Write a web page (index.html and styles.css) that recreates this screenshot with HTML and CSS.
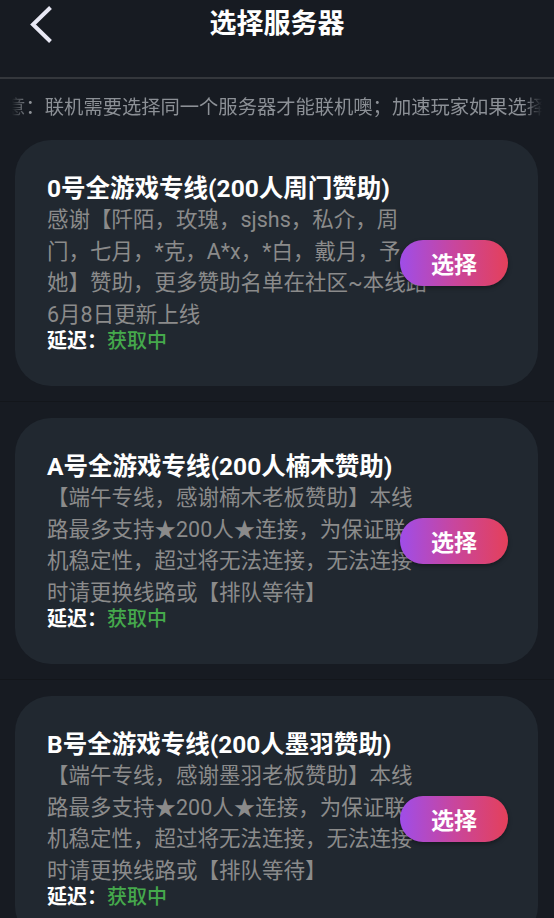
FILE: index.html
```html
<!DOCTYPE html>
<html lang="zh-CN">
<head>
<meta charset="utf-8">
<title>选择服务器</title>
<link rel="stylesheet" href="styles.css">
</head>
<body>
<div class="page">
  <header class="appbar">
    <div class="appbar-row">
      <button class="back-btn" aria-label="返回">
        <svg class="back-icon" viewBox="0 0 28 42" width="28" height="42">
          <polyline points="22.5,4.5 5,21.5 22.5,38.5" fill="none" stroke="#e8e8f4" stroke-width="4" stroke-linejoin="miter"/>
        </svg>
      </button>
      <h1 class="appbar-title">选择服务器</h1>
      <span class="appbar-spacer"></span>
    </div>
  </header>

  <div class="notice">
    <p class="notice-text">注意：联机需要选择同一个服务器才能联机噢；加速玩家如果选择的服务器不同，将无法联机</p>
  </div>

  <ul class="server-list">
    <li class="server-item">
      <div class="server-card">
        <div class="server-info">
          <h2 class="server-name">0号全游戏专线(200人周门赞助)</h2>
          <p class="server-desc">感谢【阡陌，玫瑰，sjshs，私介，周<br>门，七月，*克，A*x，*白，戴月，予<br>她】赞助，更多赞助名单在社区~本线路<br>6月8日更新上线</p>
          <p class="server-ping"><span class="ping-label">延迟：</span><span class="ping-value">获取中</span></p>
        </div>
        <button class="select-btn">选择</button>
      </div>
    </li>
    <li class="server-item">
      <div class="server-card">
        <div class="server-info">
          <h2 class="server-name">A号全游戏专线(200人楠木赞助)</h2>
          <p class="server-desc">【端午专线，感谢楠木老板赞助】本线<br>路最多支持★200人★连接，为保证联<br>机稳定性，超过将无法连接，无法连接<br>时请更换线路或【排队等待】</p>
          <p class="server-ping"><span class="ping-label">延迟：</span><span class="ping-value">获取中</span></p>
        </div>
        <button class="select-btn">选择</button>
      </div>
    </li>
    <li class="server-item">
      <div class="server-card">
        <div class="server-info">
          <h2 class="server-name">B号全游戏专线(200人墨羽赞助)</h2>
          <p class="server-desc">【端午专线，感谢墨羽老板赞助】本线<br>路最多支持★200人★连接，为保证联<br>机稳定性，超过将无法连接，无法连接<br>时请更换线路或【排队等待】</p>
          <p class="server-ping"><span class="ping-label">延迟：</span><span class="ping-value">获取中</span></p>
        </div>
        <button class="select-btn">选择</button>
      </div>
    </li>
  </ul>
</div>
</body>
</html>
```

FILE: styles.css
```css
html, body {
  margin: 0;
  padding: 0;
  background: #171b22;
  height: 100%;
  overflow: hidden;
}

body {
  font-family: Roboto, "Noto Sans CJK SC", sans-serif;
  color: #ffffff;
}

.page {
  width: 554px;
}

.appbar {
  height: 79px;
  box-sizing: border-box;
  border-bottom: 2px solid #34373c;
}

.appbar-row {
  height: 48px;
  display: grid;
  grid-template-columns: 1fr auto 1fr;
  align-items: center;
}

.back-btn {
  justify-self: start;
  margin: 0 0 0 28px;
  padding: 0;
  border: 0;
  background: none;
  width: 28px;
  height: 42px;
  display: flex;
}

.back-icon {
  display: block;
}

.appbar-title {
  margin: 0;
  font-size: 27px;
  font-weight: 700;
  line-height: 48px;
  color: #ffffff;
}

.notice {
  height: 45px;
  box-sizing: border-box;
  padding-top: 18px;
  margin: 0 12px;
  overflow: hidden;
  -webkit-mask-image: linear-gradient(to right, transparent 0, #000 16px, #000 calc(100% - 18px), transparent 100%);
  mask-image: linear-gradient(to right, transparent 0, #000 16px, #000 calc(100% - 18px), transparent 100%);
}

.notice-text {
  margin: 0 0 0 -25px;
  font-size: 19.3px;
  line-height: 22px;
  color: #8c9096;
  white-space: nowrap;
}

.server-list {
  list-style: none;
  margin: 0;
  padding: 0;
}

.server-item {
  padding: 16px 16px 15px 15px;
  border-bottom: 1px solid #13161b;
}

.server-card {
  position: relative;
  height: 246px;
  box-sizing: border-box;
  padding: 34px 32px 34px 32px;
  border-radius: 36px;
  background: #212830;
}

.server-info {
  width: 400px;
}

.server-name {
  margin: 0;
  font-size: 24.5px;
  font-weight: 700;
  line-height: 30px;
  color: #ffffff;
  white-space: nowrap;
}

.server-desc {
  margin: 0;
  font-size: 21.5px;
  line-height: 31.5px;
  color: #8b8b8b;
  white-space: nowrap;
}

.server-ping {
  margin: 0;
  font-size: 20px;
  line-height: 22px;
}

.ping-label {
  font-weight: 700;
  color: #ffffff;
}

.ping-value {
  color: #45a94c;
  font-weight: 500;
}

.select-btn {
  position: absolute;
  right: 30px;
  top: 50%;
  transform: translateY(-50%);
  width: 108px;
  height: 46px;
  border: 0;
  border-radius: 23px;
  background: linear-gradient(to right, #9f4de8, #c8469e 50%, #e4405a);
  box-shadow: 0 2px 4px rgba(0, 0, 0, 0.35);
  color: #ffffff;
  font-family: Roboto, "Noto Sans CJK SC", sans-serif;
  font-size: 23px;
  font-weight: 700;
  padding: 0;
}
```
